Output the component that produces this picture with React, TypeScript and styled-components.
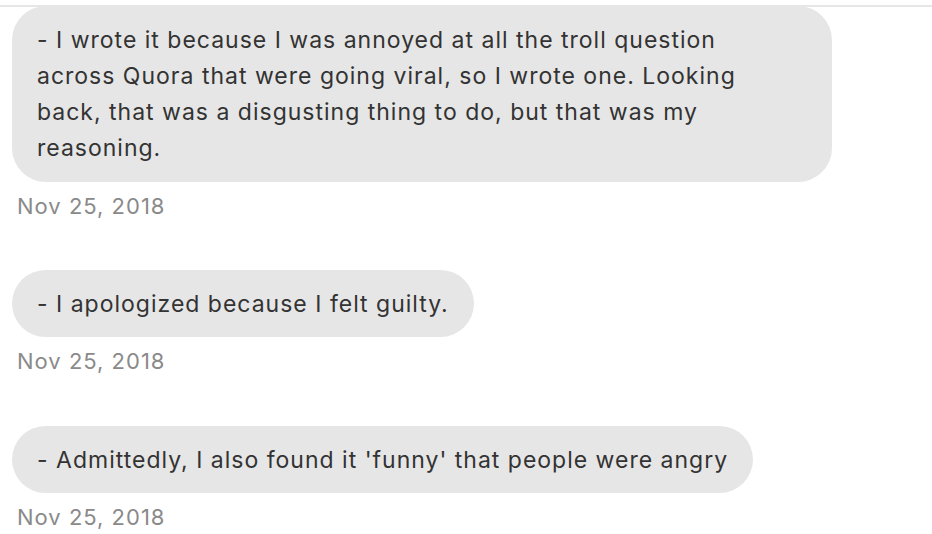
import React from "react";
import styled, { createGlobalStyle } from "styled-components";

const Global = createGlobalStyle`
  html, body { margin: 0; padding: 0; background: #ffffff; }
  body { font-family: Inter, "Noto Sans", sans-serif; -webkit-font-smoothing: antialiased; }
`;

const Page = styled.div`
  width: 932px;
  height: 534px;
  overflow: hidden;
  display: flex;
  flex-direction: column;
`;

const TopRule = styled.div`
  height: 2px;
  margin-top: 5px;
  background: #e6e6e6;
  flex-shrink: 0;
`;

const Thread = styled.div`
  display: flex;
  flex-direction: column;
  padding: 0 0 0 12px;
  margin-top: -1px;
`;

const Message = styled.div<{ $gap: number }>`
  display: flex;
  flex-direction: column;
  align-items: flex-start;
  margin-top: ${(p) => p.$gap}px;
`;

const Bubble = styled.div<{ $maxWidth?: number }>`
  background: #e6e6e6;
  color: #333333;
  border-radius: 34px;
  padding: 16px ${(p) => (p.$maxWidth ? 58 : 25)}px ${(p) => (p.$maxWidth ? 16 : 15)}px 25px;
  font-size: 23px;
  letter-spacing: 1px;
  line-height: 36px;
  max-width: ${(p) => (p.$maxWidth ? `${p.$maxWidth}px` : "none")};
  box-sizing: border-box;
`;

const Stamp = styled.div`
  color: #8a8a8a;
  font-size: 22px;
  letter-spacing: 1px;
  line-height: 26px;
  margin-top: 11px;
  padding-left: 5px;
`;

const messages = [
  {
    text:
      "- I wrote it because I was annoyed at all the troll question across Quora that were going viral, so I wrote one. Looking back, that was a disgusting thing to do, but that was my reasoning.",
    maxWidth: 820,
    gap: 0,
  },
  { text: "- I apologized because I felt guilty.", gap: 51 },
  { text: "- Admittedly, I also found it 'funny' that people were angry", gap: 52 },
];

export default function App() {
  return (
    <Page>
      <Global />
      <TopRule />
      <Thread>
        {messages.map((m, i) => (
          <Message key={i} $gap={m.gap}>
            <Bubble $maxWidth={m.maxWidth}>{m.text}</Bubble>
            <Stamp>Nov 25, 2018</Stamp>
          </Message>
        ))}
      </Thread>
    </Page>
  );
}
